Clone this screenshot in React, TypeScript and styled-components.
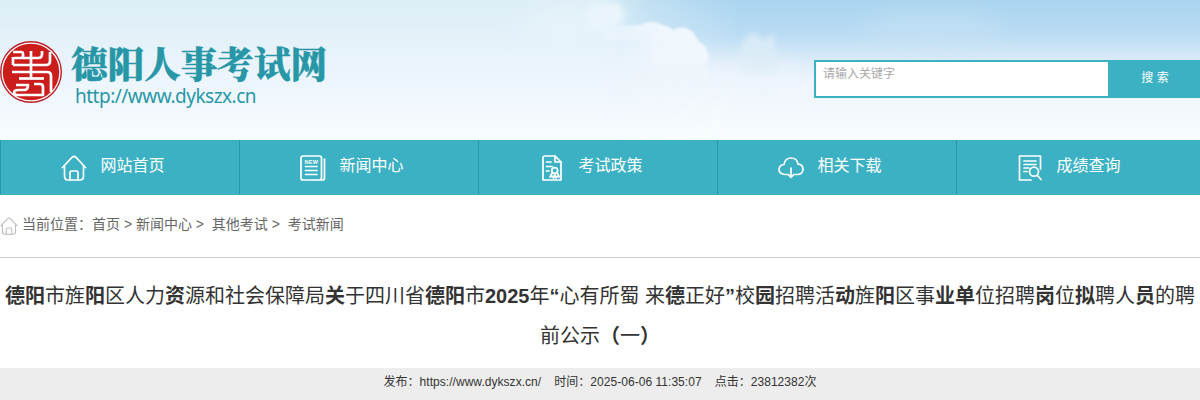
import React from "react";
import styled, { createGlobalStyle } from "styled-components";

const GlobalStyle = createGlobalStyle`
  * {
    box-sizing: border-box;
  }

  body {
    margin: 0;
    background: #fff;
    color: #333;
    font-family: "Liberation Sans", "Noto Sans CJK SC", sans-serif;
    font-size: 12px;
    overflow: hidden;
  }
`;

const Page = styled.div`
  width: 1200px;
  height: 400px;
  overflow: hidden;
`;

const Header = styled.header`
  position: relative;
  display: flex;
  justify-content: space-between;
  height: 140px;
  overflow: hidden;
`;

const SkyImage = styled.svg`
  position: absolute;
  inset: 0;
  z-index: -1;
`;

const Brand = styled.div`
  display: flex;
  gap: 8px;
  padding-top: 40px;
`;

const BrandText = styled.div`
  display: flex;
  flex-direction: column;
  color: #2797a7;
  white-space: nowrap;
`;

const SiteName = styled.div`
  height: 46px;
  line-height: 45px;
  font-family: "Noto Serif CJK SC", "Noto Sans CJK SC", serif;
  font-size: 36.6px;
  font-weight: 900;
  -webkit-text-stroke: 0.4px currentColor;
`;

const SiteUrl = styled.div`
  padding-left: 4px;
  line-height: 21px;
  font-family: "Noto Sans", sans-serif;
  font-size: 19px;
  letter-spacing: -0.5px;
`;

const Search = styled.form`
  display: flex;
  flex: none;
  width: 386px;
  height: 38px;
  margin-top: 60px;
`;

const SearchInput = styled.input`
  width: 294px;
  height: 38px;
  padding: 0 7px 11px;
  border: 2px solid #3cb1c3;
  border-right: 0;
  outline: 0;
  background: #fff;
  font: inherit;

  &::placeholder {
    color: #a9a9a9;
  }
`;

const SearchButton = styled.button`
  width: 92px;
  padding: 0 0 6px 2px;
  border: 0;
  background: #3cb1c3;
  color: #fff;
  font: inherit;
`;

const Nav = styled.nav`
  display: grid;
  grid-template-columns: repeat(4, 239px) 1fr;
  height: 55px;
  background: #3cb1c3;
`;

const NavItem = styled.a`
  display: flex;
  align-items: center;
  gap: 13.5px;
  padding: 0 0 0 60px;
  border-left: 1px solid #2699aa;
  color: #fff;
  font-size: 16px;
`;

const NavLabel = styled.span`
  padding-bottom: 7px;
`;

const Icon = styled.svg`
  flex: none;
  fill: none;
  stroke: currentColor;
  stroke-width: 1.7;
  stroke-linejoin: round;
  stroke-linecap: round;
`;

const Breadcrumb = styled.div`
  display: flex;
  align-items: center;
  gap: 4px;
  height: 63px;
  padding-bottom: 7px;
  border-bottom: 1px solid #ccc;
  color: #666;
  font-size: 14px;
  white-space: pre;
`;

const CrumbIcon = styled(Icon)`
  margin-top: 6px;
  color: #bbb;
  stroke-width: 1.5;
`;

const Title = styled.h1`
  margin: 18px 0 12px;
  font-size: 20px;
  font-weight: 400;
  line-height: 40px;
  text-align: center;
  white-space: nowrap;
`;

const Meta = styled.div`
  display: flex;
  justify-content: center;
  gap: 13px;
  height: 32px;
  background: #ededed;
  letter-spacing: 0.04px;
  line-height: 28px;
`;

const HomePaths = () => (
  <>
    <path d="M1.5 12.5 L11.2 2.2 Q13 .5 14.8 2.2 L24.5 12.5" />
    <path d="M3.5 11 V21 Q3.5 25 7 25 H19 Q22.5 25 22.5 21 V11" />
    <path d="M9 25 V17.5 Q9 16 10.5 16 H15.5 Q17 16 17 17.5 V25" />
  </>
);

const NewsPaths = () => (
  <>
    <rect x="1" y="1" width="20.5" height="24" rx="2" />
    <path d="M21.5 25 H22.5 Q24.5 25 24.5 23 V4" />
    <path d="M5.5 11.5 H17 M5.5 15.5 H17 M5.5 19.5 H17" />
    <text x="4.4" y="8.8" fontSize="5.5" fontWeight="700" fill="currentColor" stroke="none" textLength="13.5">
      NEW
    </text>
  </>
);

const PolicyPaths = () => (
  <>
    <path d="M16 1 H6 Q4 1 4 3 V25 H22 V7 Z" />
    <path d="M16 1 V7 H22" />
    <path d="M7.5 7 H12 M7.5 11.5 H13 M7.5 16 H10" />
    <circle cx="15.7" cy="15.5" r="2.9" />
    <path d="M13.5 17.5 L11 22 L13.5 21.3 L14.5 23 L15.7 19.5 L17 23 L18 21.3 L20.4 22 L18 17.5" />
  </>
);

const DownloadPaths = () => (
  <>
    <path d="M9 19.5 H7 C3 19.5 1 17 1 14.5 C1 11.5 3.5 9.5 6 9.5 C6.5 5.5 9.5 3 13 3 C17 3 19.5 5.8 20 9.2 C23 9.4 25 11.5 25 14.3 C25 17.5 22.5 19.5 19.5 19.5 H17" />
    <path d="M13 13 V22 M10.2 19.5 L13 22.3 L15.8 19.5" />
  </>
);

const ScorePaths = () => (
  <>
    <path d="M14 25 H2.5 V1 H23.5 V14" />
    <path d="M7 6 H19 M7 9.5 H19 M7 13 H12 M7 16.5 H10" />
    <circle cx="17" cy="16.7" r="4.5" />
    <path d="M20.3 20.3 L24 24.5" />
  </>
);

const navItems = [
  { label: "网站首页", Paths: HomePaths },
  { label: "新闻中心", Paths: NewsPaths },
  { label: "考试政策", Paths: PolicyPaths },
  { label: "相关下载", Paths: DownloadPaths },
  { label: "成绩查询", Paths: ScorePaths },
];

const Seal = () => (
  <svg width="63" height="64" viewBox="0 0 63 64">
    <circle cx="31" cy="32" r="31" fill="#b9202a" />
    <circle cx="31" cy="32" r="28.9" fill="#cb1d1c" stroke="#fff" strokeWidth="1.3" />
    <g fill="none" stroke="#fff" strokeWidth="2.7" strokeLinejoin="round">
      <path d="M13 12 H21 Q23 12 23 14 V16 Q23 18 21 18 H14" />
      <path d="M23 18 H38 Q42 18 42 14 V11" />
      <path d="M31 11 V38" />
      <path d="M13 25 H46 Q50 25 50 21 V12" />
      <path d="M13 17 V25" />
      <path d="M12 32 H47 Q51 32 51 36 V52" />
      <path d="M19 38.5 H44" />
      <path d="M16 45 H28 Q28 50 24 50 H18 Q14 50 14 53 Q14 55 18 55 H43 V47 Q43 44 40 44 H34" />
    </g>
  </svg>
);

const Sky = () => (
  <SkyImage width="1200" height="140" viewBox="0 0 1200 140">
    <defs>
      <linearGradient id="pale" x2="0" y2="1">
        <stop offset="0" stopColor="#dceef6" />
        <stop offset=".5" stopColor="#ebf4fc" />
        <stop offset="1" stopColor="#f8fcff" />
      </linearGradient>
      <linearGradient id="blue" x2="0" y2="1">
        <stop offset="0" stopColor="#a9d4ef" />
        <stop offset=".25" stopColor="#bbdcf3" />
        <stop offset=".45" stopColor="#deedf9" />
        <stop offset=".6" stopColor="#eff5fc" />
        <stop offset="1" stopColor="#f8fcff" />
      </linearGradient>
      <linearGradient id="reveal">
        <stop offset="0" stopColor="#000" />
        <stop offset=".3" stopColor="#888" />
        <stop offset="1" stopColor="#fff" />
      </linearGradient>
      <linearGradient id="cloud" x2="0" y2="1">
        <stop offset="0" stopColor="#eff7fd" />
        <stop offset=".4" stopColor="#eff6fc" />
        <stop offset=".8" stopColor="#f3f8fd" stopOpacity="0" />
      </linearGradient>
      <linearGradient id="cloudSide" gradientUnits="userSpaceOnUse" x1="595" x2="660">
        <stop offset="0" stopColor="#000" />
        <stop offset="1" stopColor="#fff" />
      </linearGradient>
      <mask id="right">
        <rect x="604" width="136" height="140" fill="url(#reveal)" />
        <rect x="740" width="460" height="140" fill="#fff" />
      </mask>
      <mask id="cloudFade">
        <rect x="560" width="240" height="140" fill="url(#cloudSide)" />
        <rect x="560" width="240" height="40" fill="#fff" opacity=".4" />
      </mask>
      <filter id="soft" filterUnits="userSpaceOnUse" x="400" y="-60" width="800" height="260">
        <feGaussianBlur stdDeviation="12" />
      </filter>
      <filter id="wisp" filterUnits="userSpaceOnUse" x="400" y="-60" width="800" height="260">
        <feGaussianBlur stdDeviation="3" />
      </filter>
      <filter id="edge">
        <feGaussianBlur stdDeviation=".8" />
      </filter>
    </defs>
    <rect width="1200" height="140" fill="url(#pale)" />
    <rect width="1200" height="140" fill="url(#blue)" mask="url(#right)" />
    <ellipse cx="565" cy="26" rx="38" ry="20" fill="#e8f4fa" filter="url(#soft)" opacity=".8" />
    <path d="M586 12 Q592 1 604 4 Q620 1 624 11 Q625 20 616 26 L604 34 L588 28 Z" fill="#e9f5fb" filter="url(#wisp)" />
    <g mask="url(#cloudFade)">
      <path
        d="M596 120 L603 38 Q606 28 620 25 Q632 27 642 24 Q652 19 662 25 Q670 27 673 30 Q684 24 694 33 Q697 41 704 45 Q711 55 707 65 L712 80 L722 120 Z"
        fill="url(#cloud)"
        filter="url(#edge)"
      />
    </g>
    <path d="M738 75 Q738 44 750 34 Q758 32 762 42 Q772 32 775 38 Q773 58 778 75 Z" fill="#d9ebf7" filter="url(#wisp)" />
    <ellipse cx="745" cy="80" rx="60" ry="10" fill="#eff5fc" filter="url(#soft)" />
    <ellipse cx="932" cy="30" rx="70" ry="18" fill="#cfe6f6" filter="url(#soft)" opacity=".4" />
  </SkyImage>
);

const App: React.FC = () => (
  <>
    <GlobalStyle />
    <Page>
      <Header>
        <Sky />
        <Brand>
          <Seal />
          <BrandText>
            <SiteName>德阳人事考试网</SiteName>
            <SiteUrl>http://www.dykszx.cn</SiteUrl>
          </BrandText>
        </Brand>
        <Search>
          <SearchInput placeholder="请输入关键字" />
          <SearchButton type="button">搜 索</SearchButton>
        </Search>
      </Header>
      <Nav>
        {navItems.map(({ label, Paths }) => (
          <NavItem key={label}>
            <Icon width="26" height="26" viewBox="0 0 26 26">
              <Paths />
            </Icon>
            <NavLabel>{label}</NavLabel>
          </NavItem>
        ))}
      </Nav>
      <Breadcrumb>
        <CrumbIcon width="18" height="18" viewBox="0 0 26 26">
          <HomePaths />
        </CrumbIcon>
        <span>{"当前位置：首页 > 新闻中心 >  其他考试 >  考试新闻"}</span>
      </Breadcrumb>
      <Title>
        <b>德阳</b>市旌<b>阳</b>区人力<b>资</b>源和社会保障局<b>关</b>于四川省<b>德阳</b>市<b>2025</b>年<b>“</b>心有所蜀 来
        <b>德</b>正好<b>”</b>校<b>园</b>招聘活<b>动</b>旌<b>阳</b>区事<b>业单</b>位招聘<b>岗</b>位<b>拟</b>聘人<b>员</b>的聘
        <br />
        前公示<b>（</b>一<b>）</b>
      </Title>
      <Meta>
        <span>发布：https://www.dykszx.cn/</span>
        <span>时间：2025-06-06 11:35:07</span>
        <span>点击：23812382次</span>
      </Meta>
    </Page>
  </>
);

export default App;
